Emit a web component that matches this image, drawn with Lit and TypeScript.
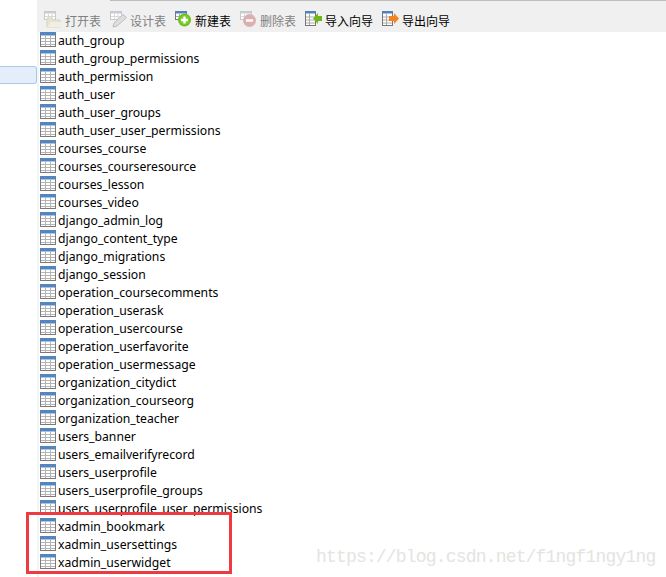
import { LitElement, html, css, svg } from "lit";
import { customElement } from "lit/decorators.js";

const tables = ["auth_group","auth_group_permissions","auth_permission","auth_user","auth_user_groups","auth_user_user_permissions","courses_course","courses_courseresource","courses_lesson","courses_video","django_admin_log","django_content_type","django_migrations","django_session","operation_coursecomments","operation_userask","operation_usercourse","operation_userfavorite","operation_usermessage","organization_citydict","organization_courseorg","organization_teacher","users_banner","users_emailverifyrecord","users_userprofile","users_userprofile_groups","users_userprofile_user_permissions","xadmin_bookmark","xadmin_usersettings","xadmin_userwidget"];

const tableIcon = html`<svg class="ticon" width="16" height="15" viewBox="0 0 16 15">
  <rect x="0.5" y="0.5" width="15" height="14" fill="#fff" stroke="#7a7a7a"/>
  <rect x="0" y="0" width="16" height="3.5" fill="#5585bd"/>
  <path d="M1 6.5H15M1 9.5H15M1 12.5H15M5.5 4V14M10.5 4V14" stroke="#b4b4b4" fill="none"/>
</svg>`;

const smallTable = (dim: boolean) => svg`<rect x="0.5" y="0.5" width="11" height="8" fill="#fff" stroke="${dim ? "#c8c8c8" : "#777"}"/><rect x="0" y="0" width="12" height="2.5" fill="${dim ? "#c5cbd3" : "#4f81bd"}"/><path d="M1 5.5H11M4.5 3V8M8 3V8" stroke="${dim ? "#d8d8d8" : "#aaa"}"/>`;

const docTable = svg`<rect x="0.5" y="0.5" width="10" height="14" fill="#fff" stroke="#777"/><rect x="0" y="0" width="11" height="2.5" fill="#4f81bd"/><path d="M1 6H10M1 9H10M1 12H10M4.5 3V14" stroke="#aaa"/>`;

const icons = {
  open: html`<svg width="20" height="18" viewBox="0 0 20 18">${smallTable(true)}<path d="M3 16V7H8L9.5 9H16V16Z" fill="#e6e3d2" stroke="#dad6c4"/><path d="M3.5 16L6.5 11H19L16 16Z" fill="#f1efe3"/></svg>`,
  design: html`<svg width="20" height="18" viewBox="0 0 20 18">${smallTable(true)}<path d="M3 16L4 12L13 3.5L16.5 6.5L7 15Z" fill="#dedede" stroke="#bcbcbc"/></svg>`,
  add: html`<svg width="20" height="18" viewBox="0 0 20 18">${smallTable(false)}<circle cx="9.5" cy="9" r="6.5" fill="#6ebe1e"/><circle cx="9.5" cy="9" r="5" fill="#7ccb2b"/><path d="M6 9H13M9.5 5.5V12.5" stroke="#fff" stroke-width="2.4"/></svg>`,
  del: html`<svg width="20" height="18" viewBox="0 0 20 18">${smallTable(true)}<circle cx="9.5" cy="9.5" r="6.5" fill="#dcb0b0"/><path d="M6 9.5H13" stroke="#fff" stroke-width="2.4"/></svg>`,
  imp: html`<svg width="20" height="18" viewBox="0 0 20 18">${docTable}<path d="M8 7.5L13 2V5H17V10H13V13Z" fill="#6fb61c"/></svg>`,
  exp: html`<svg width="20" height="18" viewBox="0 0 20 18">${docTable}<path d="M7 5H12V2L17 7.5L12 13V10H7Z" fill="#f58220"/></svg>`,
};

const tools = [
  { i: icons.open, t: "打开表", c: "dim pad" },
  { i: icons.design, t: "设计表", c: "dim" },
  { i: icons.add, t: "新建表", c: "" },
  { i: icons.del, t: "删除表", c: "dim" },
  { i: icons.imp, t: "导入向导", c: "" },
  { i: icons.exp, t: "导出向导", c: "" },
];

@customElement("app-root")
export class AppRoot extends LitElement {
  static styles = css`
    :host { display: block; width: 666px; height: 577px; background: #fff; overflow: hidden; position: relative; font-family: "Noto Sans", "Liberation Sans", sans-serif; }
    .page { display: flex; height: 577px; }
    .side { width: 37px; flex: none; padding-top: 66px; box-sizing: border-box; }
    .sel { width: 36.5px; height: 18px; box-sizing: border-box; background: #e4eefa; border: 1px solid #a9c9ec; border-left: none; border-radius: 0 3px 3px 0; }
    .main { flex: 1; min-width: 0; display: flex; flex-direction: column; }
    .bar { position: relative; height: 32px; flex: none; box-sizing: border-box; background: #f0f0f0; display: flex; gap: 9px; padding: 11px 0 0 7px; font: 12px "Noto Sans CJK SC", sans-serif; }
    .bar::before { content: ""; position: absolute; left: 73px; right: 0; top: 0; height: 1px; background: #bcbcbc; }
    .tool { display: flex; align-items: center; height: 18px; color: #000; }
    .tool.dim { color: #808080; }
    .tool svg { flex: none; }
    .tool.pad span { margin-left: 1px; }
    .list { flex: 1; border-left: 2px solid #f5f5f5; }
    .row { height: 18px; display: flex; align-items: flex-start; gap: 2px; padding-left: 1px; font-size: 12.2px; line-height: 17px; color: #000; white-space: nowrap; }
    .ticon { flex: none; }
    .mark { position: absolute; left: 26px; top: 512px; width: 206px; height: 62px; box-sizing: border-box; border: 3px solid #ee3a40; pointer-events: none; }
    .wm { position: absolute; left: 316px; top: 547px; font: 18px "Liberation Mono", monospace; letter-spacing: -0.82px; color: #e4e4e0; white-space: nowrap; }
  `;
  render() {
    return html`<div class="page">
      <div class="side"><div class="sel"></div></div>
      <div class="main">
        <div class="bar">${tools.map(x => html`<div class="tool ${x.c}">${x.i}<span>${x.t}</span></div>`)}</div>
        <div class="list">${tables.map(t => html`<div class="row">${tableIcon}<span>${t}</span></div>`)}</div>
      </div>
    </div>
    <div class="mark"></div>
    <div class="wm">https://blog.csdn.net/f1ngf1ngy1ng</div>`;
  }
}
